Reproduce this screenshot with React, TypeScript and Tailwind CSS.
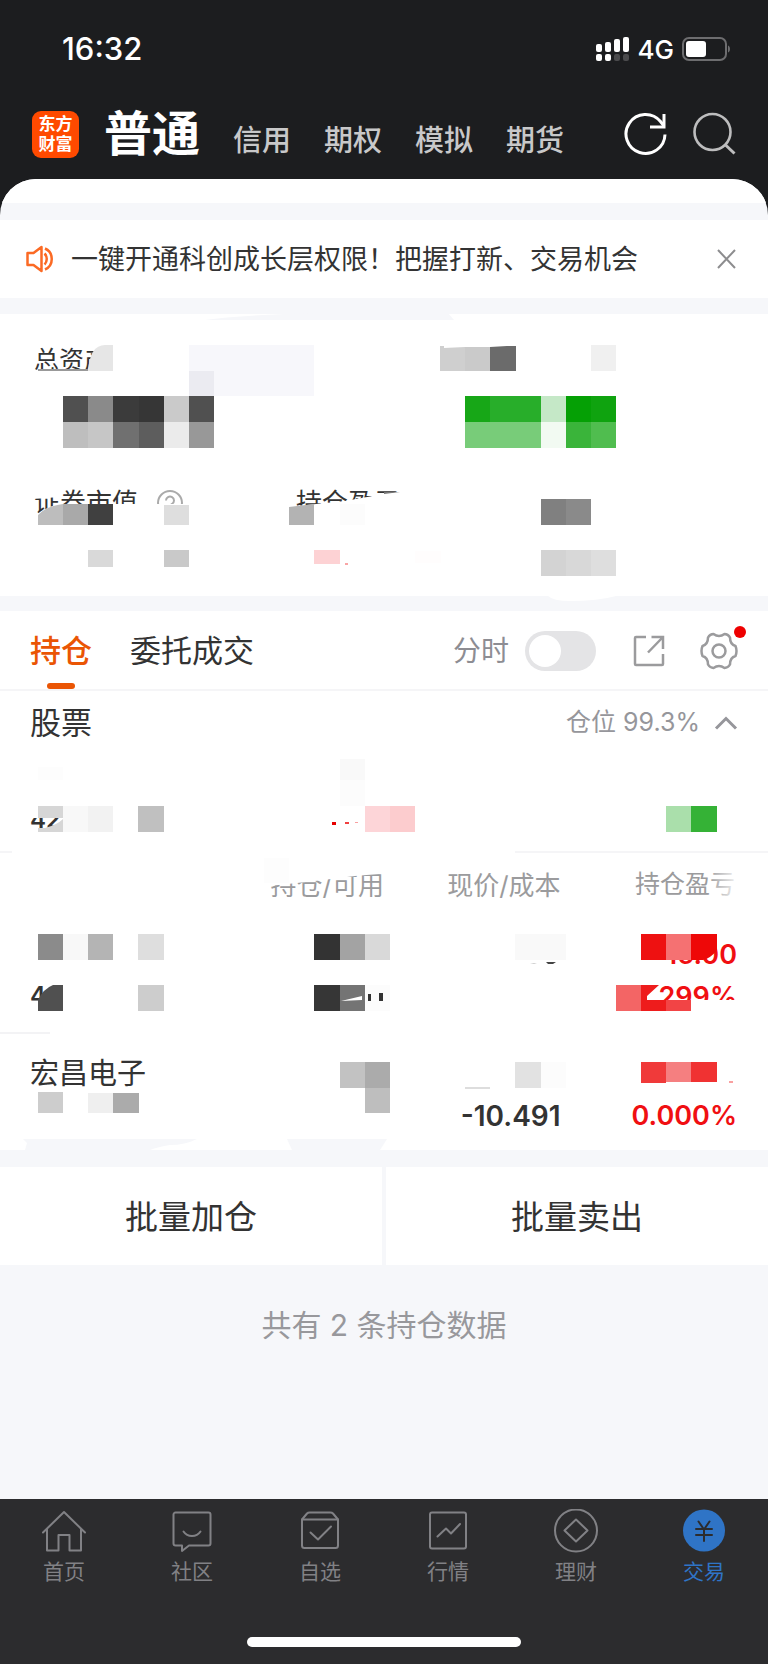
import type { ReactNode } from "react";

type Cell = [x: number, y: number, w: number, h: number, color: string];

const accountTabs = ["信用", "期权", "模拟", "期货"];

const assetCells: Cell[] = [
  [189, 345, 125, 51, "#f7f7fb"],
  [189, 371, 25, 25, "#ebebf1"],
  [63, 396, 25, 26, "#505050"],
  [88, 396, 25, 26, "#8a8a8a"],
  [113, 396, 26, 26, "#3b3b3b"],
  [139, 396, 25, 26, "#363636"],
  [164, 396, 25, 26, "#cacaca"],
  [189, 396, 25, 26, "#505050"],
  [63, 422, 25, 26, "#bebebe"],
  [88, 422, 25, 26, "#c6c6c6"],
  [113, 422, 26, 26, "#707070"],
  [139, 422, 25, 26, "#5d5d5d"],
  [164, 422, 25, 26, "#ebebeb"],
  [189, 422, 25, 26, "#989898"],
  [440, 346, 25, 25, "#cfcfcf"],
  [465, 346, 25, 25, "#cacaca"],
  [490, 346, 26, 25, "#6b6b6b"],
  [591, 345, 25, 26, "#f0f0f0"],
  [465, 396, 25, 26, "#17a717"],
  [490, 396, 51, 26, "#28ae2a"],
  [541, 396, 25, 26, "#c5e8c7"],
  [566, 396, 25, 26, "#05a005"],
  [591, 396, 25, 26, "#0fa30f"],
  [465, 422, 76, 26, "#78cc79"],
  [541, 422, 25, 26, "#f2faf2"],
  [566, 422, 25, 26, "#3ab43a"],
  [591, 422, 25, 26, "#50bd4f"],
  [63, 504, 25, 21, "#a9a9a9"],
  [88, 504, 25, 21, "#404040"],
  [164, 505, 25, 20, "#dedede"],
  [340, 504, 25, 21, "#fcfcfc"],
  [541, 499, 25, 26, "#808080"],
  [566, 499, 25, 26, "#8a8a8a"],
  [88, 550, 25, 17, "#d9d9d9"],
  [164, 550, 25, 17, "#c9c9c9"],
  [314, 550, 26, 14, "#fdd2d4"],
  [345, 563, 3, 2, "#f9a5a5"],
  [415, 551, 26, 12, "#fffdfd"],
  [541, 550, 25, 26, "#d3d3d3"],
  [566, 550, 25, 26, "#d8d8d8"],
  [591, 550, 25, 26, "#dedede"],
];

const holdingCells: Cell[] = [
  [38, 767, 25, 13, "#fdfdfd"],
  [340, 759, 25, 21, "#f9f9f9"],
  [340, 780, 25, 26, "#fcfcfc"],
  [38, 806, 25, 12, "#d6d6d6"],
  [63, 806, 25, 26, "#f8f8f8"],
  [88, 806, 25, 26, "#f2f2f2"],
  [138, 806, 26, 26, "#c0c0c0"],
  [332, 822, 4, 3, "#e60000"],
  [345, 822, 4, 2, "#f04040"],
  [355, 822, 3, 1, "#f8a0a0"],
  [365, 806, 25, 26, "#fdd5d8"],
  [390, 806, 25, 26, "#fcccce"],
  [666, 806, 25, 26, "#aadfab"],
  [691, 806, 26, 26, "#35b236"],
  [264, 858, 25, 25, "#fdfdfd"],
  [38, 934, 25, 26, "#8b8b8b"],
  [63, 934, 25, 26, "#f8f8f8"],
  [88, 934, 25, 26, "#b4b4b4"],
  [138, 934, 26, 26, "#dedede"],
  [314, 934, 26, 26, "#333333"],
  [340, 934, 25, 26, "#a3a3a3"],
  [365, 934, 25, 26, "#d9d9d9"],
  [515, 934, 51, 26, "#f9f9f9"],
  [641, 934, 25, 26, "#ee1111"],
  [666, 934, 25, 26, "#f57172"],
  [138, 985, 26, 26, "#cdcdcd"],
  [314, 985, 26, 26, "#363636"],
  [340, 985, 25, 26, "#747474"],
  [365, 985, 25, 26, "#fcfcfc"],
  [616, 985, 25, 26, "#f36565"],
  [666, 1000, 25, 11, "#f24445"],
  [38, 1092, 25, 21, "#cdcdcd"],
  [88, 1093, 25, 20, "#efefef"],
  [113, 1093, 26, 20, "#ababab"],
  [340, 1062, 25, 26, "#c2c2c2"],
  [365, 1062, 25, 26, "#ababab"],
  [365, 1088, 25, 25, "#bebebe"],
  [515, 1062, 26, 26, "#e2e2e2"],
  [541, 1062, 25, 26, "#fcfcfc"],
  [465, 1087, 25, 2, "#dddddd"],
  [641, 1062, 25, 21, "#f03a3a"],
  [666, 1062, 25, 20, "#f57f80"],
  [691, 1062, 26, 20, "#f03232"],
  [729, 1081, 4, 2, "#f9a0a0"],
];

function Mosaic({ cells }: { cells: Cell[] }) {
  return (
    <>
      {cells.map(([x, y, w, h, color]) => (
        <rect key={`${x}-${y}`} x={x} y={y} width={w} height={h} fill={color} />
      ))}
    </>
  );
}

function SignalIcon() {
  return (
    <svg className="h-6 w-[34px]" viewBox="0 0 34 24" fill="#fff">
      <rect x="0" y="7" width="6" height="8" rx="2" />
      <rect x="9" y="5" width="6" height="10" rx="2" />
      <rect x="18" y="2" width="6" height="13" rx="2" />
      <rect x="27" y="0" width="6" height="15" rx="2" />
      <rect x="0" y="17" width="6" height="7" rx="2" />
      <rect x="9" y="17" width="6" height="7" rx="2" />
      <rect x="18" y="17" width="6" height="7" rx="2" fill="#4b4b4d" />
      <rect x="27" y="17" width="6" height="7" rx="2" fill="#4b4b4d" />
    </svg>
  );
}

function BatteryIcon() {
  return (
    <svg className="h-6 w-[50px]" viewBox="0 0 50 24" fill="none">
      <rect x="1" y="1" width="43" height="22" rx="6" stroke="#6d6d6f" strokeWidth="2" />
      <rect x="4" y="4" width="20" height="16" rx="3" fill="#fff" />
      <path d="M46 8.500c2.600.8 2.600 6.200 0 7z" fill="#6d6d6f" />
    </svg>
  );
}

function NavIcon({ children }: { children: ReactNode }) {
  return (
    <svg
      className="size-11"
      viewBox="0 0 44 44"
      fill="none"
      stroke="currentColor"
      strokeWidth="2"
      strokeLinecap="round"
      strokeLinejoin="round"
    >
      {children}
    </svg>
  );
}

const navItems = [
  {
    label: "首页",
    icon: (
      <>
        <path d="M1 23.500 22 3l21 20.500" />
        <path d="M5 20.500V41.500H16.500V26H27.500V41.500H39V20.500" />
      </>
    ),
  },
  {
    label: "社区",
    icon: (
      <>
        <path d="M5.500 3.500h33a2 2 0 0 1 2 2v29a2 2 0 0 1-2 2H19L12 42V36.500H5.500a2 2 0 0 1-2-2v-29a2 2 0 0 1 2-2z" />
        <path d="M13.500 22.500c4 6 13 6 17 0" />
      </>
    ),
  },
  {
    label: "自选",
    icon: (
      <>
        <path d="M4 10.500V36.500a2.500 2.500 0 0 0 2.500 2.500h31a2.500 2.500 0 0 0 2.500-2.500V10.500z" />
        <path d="M4 10.500 9 4.500q1-1 2.500-1h21q1.500 0 2.500 1l5 6" />
        <path d="m12.500 23.500 7.500 7 13-13" />
      </>
    ),
  },
  {
    label: "行情",
    icon: (
      <>
        <rect x="4" y="3.500" width="36" height="36" rx="2" />
        <path d="M11.500 27.500 20 19.500l5 5 9-9.500" />
      </>
    ),
  },
  {
    label: "理财",
    icon: (
      <>
        <circle cx="22" cy="21.500" r="21" />
        <path d="M22 10.500 33.500 21.500 22 32.500 10.500 21.500z" />
      </>
    ),
  },
  {
    label: "交易",
    active: true,
    icon: (
      <>
        <circle cx="22" cy="21.500" r="21" fill="#2f74c6" stroke="none" />
        <path d="m16.500 12.500 5.500 8 5.500-8M14 20h16M14 26h16M22 20v12" stroke="#2c2c2e" />
      </>
    ),
  },
];

function Header() {
  return (
    <header className="bg-[#1c1d1f]">
      <div className="flex h-[98px] items-center justify-between pl-[62px] pr-9 text-white">
        <time className="text-[31px] font-medium">16:32</time>
        <div className="flex items-center gap-2">
          <SignalIcon />
          <span className="text-[26px] font-medium">4G</span>
          <BatteryIcon />
        </div>
      </div>

      <div className="flex h-[81px] items-center justify-between pb-[9px] pl-8 pr-8">
        <div className="flex items-center gap-[25px]">
          <div className="flex size-[47px] flex-col items-center justify-center rounded-[9px] bg-[#ff4a00] text-[17px] leading-5 font-bold text-white">
            <span>东方</span>
            <span>财富</span>
          </div>
          <nav className="flex items-end gap-[33px] text-[#c8c8c9]">
            <a href="#normal" className="text-5xl leading-[50px] font-bold text-white">普通</a>
            {accountTabs.map((tab) => (
              <a key={tab} href="#account" className="text-[29px] leading-9 font-medium">{tab}</a>
            ))}
          </nav>
        </div>
        <div className="flex items-center gap-6">
          <button aria-label="刷新">
            <svg className="size-11" viewBox="0 0 44 44" fill="none" stroke="#fff" strokeWidth="3">
              <path d="M41 22.500A19.500 19.500 0 1 1 36.500 9.500L40 14" />
              <path d="M40 2v13H26" />
            </svg>
          </button>
          <button aria-label="搜索">
            <svg className="size-11" viewBox="0 0 44 44" fill="none" stroke="#bdbdbe" strokeWidth="2.600">
              <circle cx="20.500" cy="20" r="18" />
              <path d="m33 32.500 9.500 9" strokeWidth="3" />
            </svg>
          </button>
        </div>
      </div>
    </header>
  );
}

function Notice() {
  return (
    <div className="flex h-[78px] items-center bg-white pl-[26px] pr-[31px]">
      <svg className="h-7 w-7" viewBox="0 0 28 28" fill="none" stroke="#fb6a24" strokeWidth="2.500" strokeLinejoin="round">
        <path d="M1.500 8h6l8-6v24l-8-6h-6z" />
        <path d="M18.500 8.500c3 3 3 8 0 11" />
        <path d="M19 3.500c9 4 9 17 0 21" />
      </svg>
      <p className="ml-[17px] flex-1 pt-0.5 text-[27px] text-[#333]">一键开通科创成长层权限！把握打新、交易机会</p>
      <button aria-label="关闭">
        <svg className="size-5" viewBox="0 0 20 20" stroke="#8d8d8f" strokeWidth="2">
          <path d="m1 1 17 18M18 1 1 19" />
        </svg>
      </button>
    </div>
  );
}

function Assets() {
  return (
    <section className="relative h-[282px] bg-white px-[34px] pt-[27px] text-[#333]">
      <h2 className="text-[25px] leading-[38px]">总资产</h2>
      <div className="mt-[105px] grid grid-cols-[262px_1fr] text-[26px] leading-[38px]">
        <div className="flex items-center gap-[19px]">
          <span>证券市值</span>
          <svg className="size-[26px]" viewBox="0 0 26 26" fill="none" stroke="#aaa" strokeWidth="2">
            <circle cx="13" cy="13" r="12" />
            <path d="M9 10.500a4 4 0 1 1 6 3.500q-2 1-2 3" />
          </svg>
        </div>
        <span>持仓盈亏</span>
      </div>

      {/* Privacy mosaic */}
      <svg
        className="pointer-events-none absolute inset-0 size-full overflow-visible"
        viewBox="0 314 768 282"
        preserveAspectRatio="none"
        aria-hidden="true"
      >
        <path d="M205 320Q240 315 320 313H448L454 320z" fill="#f6f7fa" />
        <path d="M30 370H120V385H30zM93 340H120V350H93z" fill="#fff" />
        <path d="M32 488H60V497L32 499z" fill="#fff" />
        <path d="M34 517Q48 505 63 504H200V525H34z" fill="#fff" />
        <path d="M288 507 316 504 345 501 384 494 406 490V525H288z" fill="#fff" />
        <path d="M38 369H88V371H38z" fill="#999" />
        <path d="M88 371Q90 345 105 345H113V371z" fill="#e6e6e6" />
        <path d="M38 525V515Q46 506 63 504V525z" fill="#bdbdbd" />
        <path d="M289 507 314 504V525H289z" fill="#b3b3b3" />
        <path d="M384 492H400L384 494z" fill="#777" />
        <Mosaic cells={assetCells} />
        <path d="M444 346H507L490 347 465 347 444 348z" fill="#fff" />
        <path d="M548 596Q553 601 570 601 598 601 616 596z" fill="#fff" />
      </svg>
    </section>
  );
}

function HoldingTabs() {
  return (
    <div className="flex h-20 items-center justify-between border-b-2 border-[#f5f5f7] pl-[30px] pr-[30px]">
      <div className="flex h-full items-center gap-[38px] text-[31px]">
        <button className="relative h-full pt-0.5 font-medium text-[#ea5504]">
          持仓
          <span className="absolute bottom-0 left-1/2 h-1.5 w-7 -translate-x-1/2 rounded-full bg-[#ea5504]" />
        </button>
        <button className="h-full pt-0.5 text-[#333]">委托成交</button>
      </div>
      <div className="flex items-center pt-0.5">
        <label htmlFor="minute" className="text-[28px] text-[#8d8d93]">分时</label>
        <input
          id="minute"
          type="checkbox"
          role="switch"
          className="ml-4 h-10 w-[71px] appearance-none rounded-full bg-[#e4e4e6] before:mt-1 before:ml-1 before:block before:size-8 before:rounded-full before:bg-white checked:bg-[#ea5504] checked:before:ml-[35px]"
        />
        <button aria-label="分享" className="ml-[37px]">
          <svg className="size-8" viewBox="0 0 32 32" fill="none" stroke="#9b9b9d" strokeWidth="2.500">
            <path d="M13 2H3a1 1 0 0 0-1 1v26a1 1 0 0 0 1 1h26a1 1 0 0 0 1-1V19" />
            <path d="M18.500 2H30v12M30 2 15 17.500" />
          </svg>
        </button>
        <button aria-label="设置" className="relative ml-[35px]">
          <svg className="size-[38px]" viewBox="0 0 38 38" fill="none" stroke="#9b9b9d" strokeWidth="2.500" strokeLinejoin="round">
            <path d="M13.500 2Q19 6 24.500 2Q28 2 30 5.500Q30 12.500 35.500 14Q37.500 19 35.500 24Q30 25.500 30 32.500Q28 36 24.500 36Q19 32 13.500 36Q10 36 8 32.500Q8 25.500 2.500 24Q.5 19 2.500 14Q8 12.500 8 5.500Q10 2 13.500 2z" />
            <circle cx="19" cy="19" r="6.500" />
          </svg>
          <span className="absolute -top-1.5 -right-2 size-3 rounded-full bg-[#ee0000]" />
        </button>
      </div>
    </div>
  );
}

function Holdings() {
  return (
    <section className="relative bg-white">
      <HoldingTabs />
      <div className="h-[162px] border-b-2 border-[#f5f5f7] px-[30px]">
        <div className="flex h-16 items-center justify-between">
          <h2 className="text-[31px] text-[#333]">股票</h2>
          <button className="flex items-center gap-3.5 text-[25px] text-[#96969b]">
            <span>仓位 99.3%</span>
            <svg className="h-4 w-6" viewBox="0 0 24 16" fill="none" stroke="#96969b" strokeWidth="3">
              <path d="m2 13.500 10-10 10 10" />
            </svg>
          </button>
        </div>
        <p className="mt-[49px] text-2xl leading-8 font-semibold text-[#333]">42</p>
      </div>

      <table className="w-full table-fixed text-right text-[28px] text-[#333]">
        <thead>
          <tr className="h-[60px] text-[25px] text-[#9b9b9d]">
            <th className="w-[28%]" />
            <th className="w-[22%] pt-1 text-[26px] font-normal">持仓/可用</th>
            <th className="w-[23%] pt-1 text-[26px] font-normal">现价/成本</th>
            <th className="pt-1 pr-[33px] font-normal">持仓盈亏</th>
          </tr>
        </thead>
        <tbody className="font-semibold">
          <tr className="h-[120px] align-top leading-[42px]">
            <td className="pt-[62px] pl-[30px] text-left text-2xl leading-[42px]">4</td>
            <td />
            <td />
            <td className="pt-[21px] pr-[31px] text-[27px] leading-[42px] text-[#f00f12]">
              <div>16.00</div>
              <div>299%</div>
            </td>
          </tr>
          <tr className="h-[117px] align-top leading-[42px]">
            <td className="pt-5 pl-[30px] text-left text-[29px] leading-[42px] font-normal">宏昌电子</td>
            <td />
            <td className="pt-[62px]">-10.491</td>
            <td className="pt-[62px] pr-[31px] text-[27px] leading-[42px] text-[#f00f12]">0.000%</td>
          </tr>
        </tbody>
      </table>

      {/* Privacy mosaic */}
      <svg
        className="pointer-events-none absolute inset-0 size-full"
        viewBox="0 611 768 539"
        preserveAspectRatio="none"
        aria-hidden="true"
      >
        <defs>
          <linearGradient id="fade" x1="0" x2="1">
            <stop offset="0" stopColor="#fff" stopOpacity="0" />
            <stop offset="1" stopColor="#fff" stopOpacity="0.900" />
          </linearGradient>
        </defs>
        <path d="M12 849H515V855H12z" fill="#fff" />
        <path d="M28 805H64V818H28z" fill="#fff" />
        <path d="M260 860H390V873L355 876 315 881 260 887z" fill="#fff" />
        <rect x="708" y="868" width="30" height="32" fill="url(#fade)" />
        <path d="M640 1000H740V1012H640z" fill="#fff" />
        <Mosaic cells={holdingCells} />
        <path d="M38 832V828H45Q57 825 63 819V832z" fill="#d6d6d6" />
        <path d="M38 1011V1000Q43 989 53 985H63V1011z" fill="#505050" />
        <path d="M691 934H717V950Q711 958 703 960H691z" fill="#ee0808" />
        <path d="M641 985H659L647 996V1000H666V1011H641z" fill="#ee1c1c" />
        <path d="M341 1001 362 996V1000L341 1001z" fill="#fff" />
        <path d="M368 994h3v7h-3zM379 993h4v8h-4z" fill="#333" />
        <path d="M546 962h10l-3 2h-5z" fill="#444" />
        <path d="M530 963h7l-3 1z" fill="#ccc" />
        <path d="M0 1032H50V1034H0z" fill="#f3f3f5" />
        <path d="M23 1139H197Q185 1145 170 1145 158 1147 150 1150H25L27 1143z" fill="#f6f7fa" />
        <path d="M287 1139H387L380 1150H292z" fill="#f6f7fa" />
      </svg>
    </section>
  );
}

export default function App() {
  return (
    <div className="flex min-h-screen flex-col bg-[#1c1d1f] font-['Inter','Noto_Sans_CJK_SC',sans-serif]">
      <Header />

      <main className="flex flex-1 flex-col overflow-hidden rounded-t-[36px] bg-[#f6f7fa]">
        <div className="mb-[17px] h-6 bg-white" />
        <Notice />
        <div className="mt-4">
          <Assets />
        </div>
        <div className="mt-[15px]">
          <Holdings />
        </div>
        <div className="mt-[17px] grid grid-cols-2 gap-1 text-[33px] text-[#333]">
          <button className="h-[98px] bg-white pt-1">批量加仓</button>
          <button className="h-[98px] bg-white pt-1">批量卖出</button>
        </div>
        <p className="pt-[38px] text-center text-[30px] text-[#98989c]">共有 2 条持仓数据</p>
      </main>

      <footer className="flex h-[165px] flex-col items-center justify-between bg-[#2c2c2e] pt-2.5 pb-[17px]">
        <nav className="grid w-full grid-cols-6">
          {navItems.map((item) => (
            <a
              key={item.label}
              href="#nav"
              className={`flex flex-col items-center gap-[3px] text-[21px] ${item.active ? "text-[#2f74c6]" : "text-[#818185]"}`}
            >
              <NavIcon>{item.icon}</NavIcon>
              <span>{item.label}</span>
            </a>
          ))}
        </nav>
        <div className="h-2.5 w-[274px] rounded-full bg-white" />
      </footer>
    </div>
  );
}
